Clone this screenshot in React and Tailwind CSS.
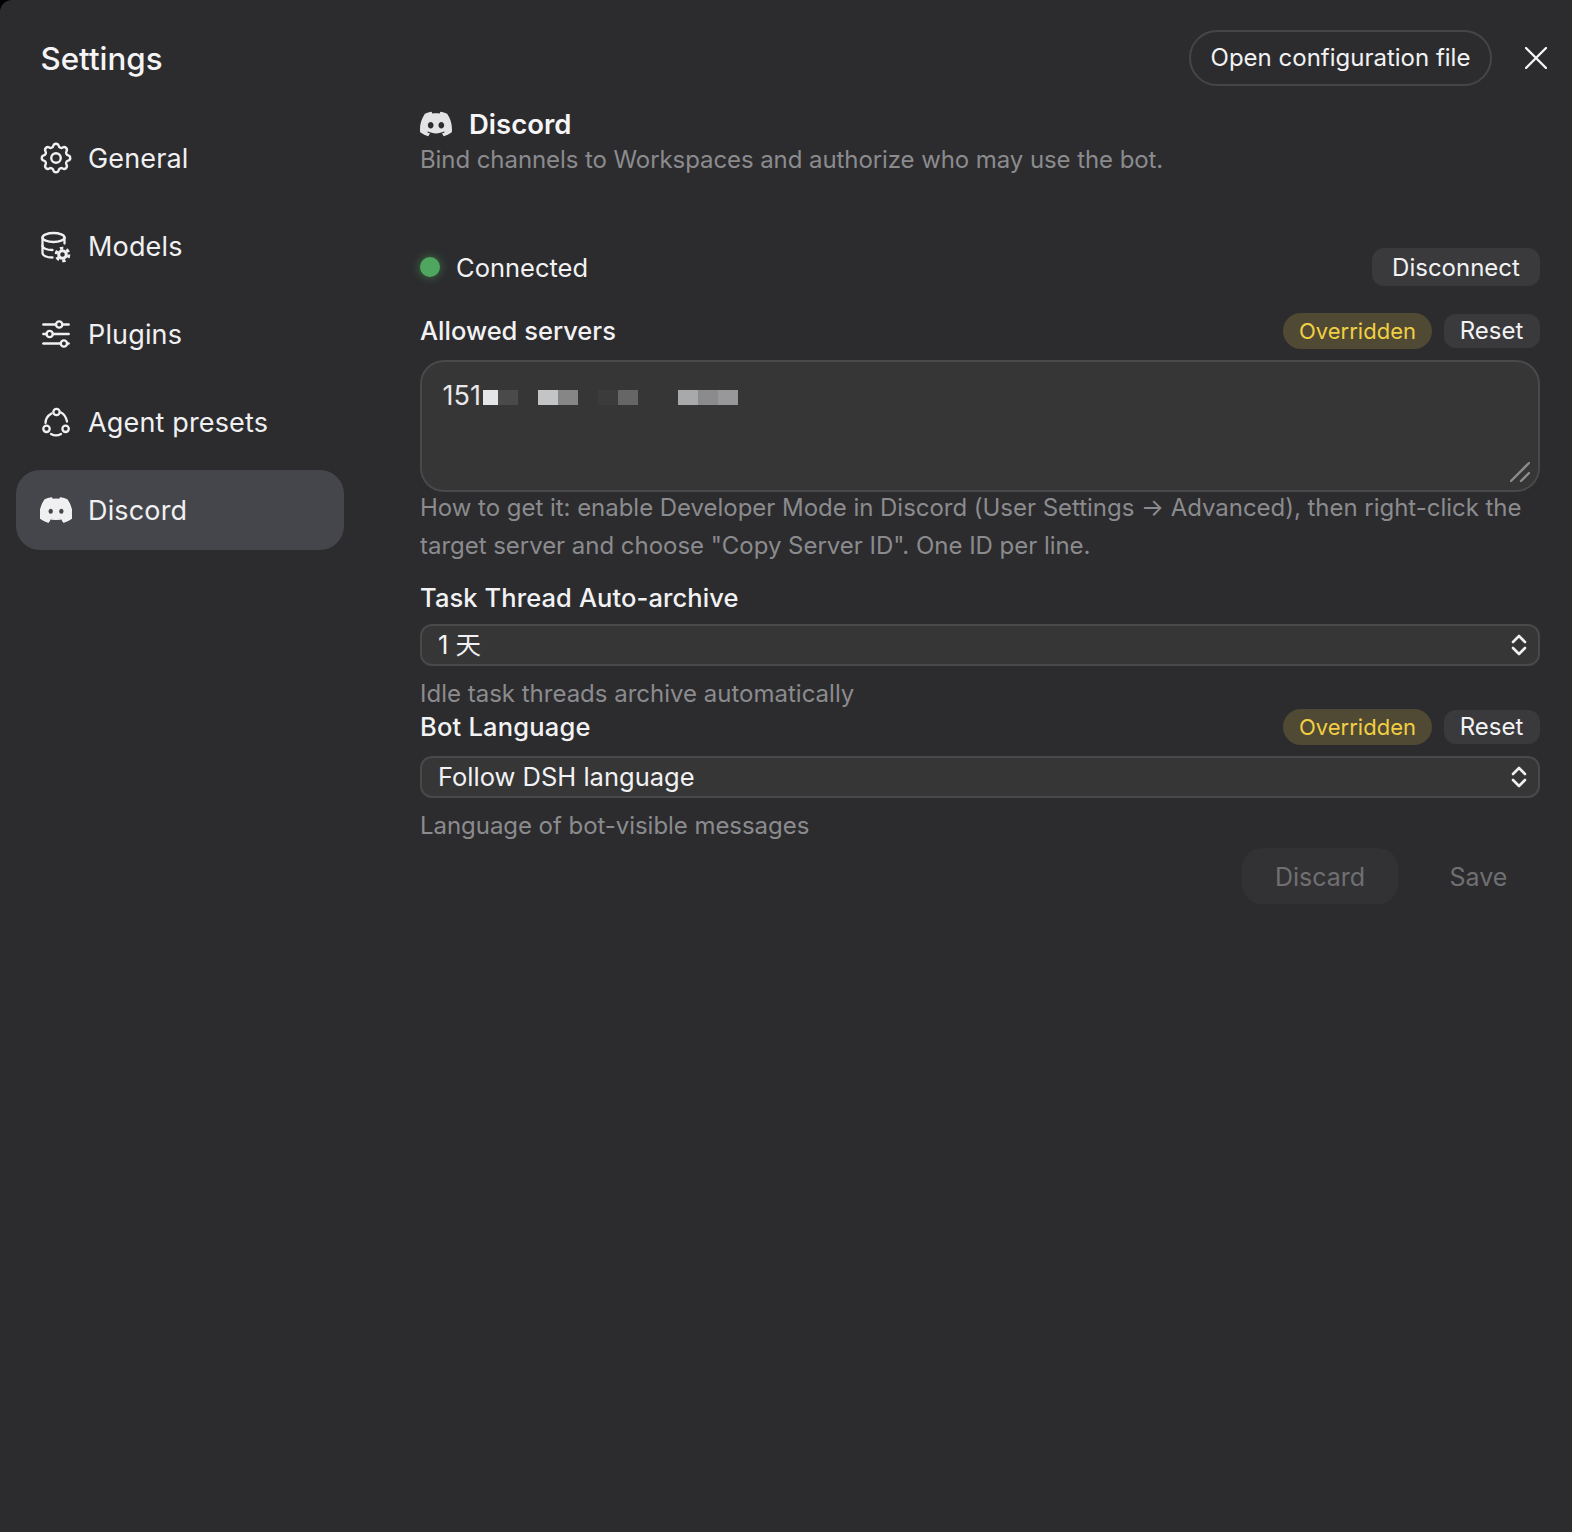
import React from "react";
import { TbSettings, TbAdjustmentsHorizontal } from "react-icons/tb";
import { SiDiscord } from "react-icons/si";

function AgentIcon({ className }) {
  return (
    <svg viewBox="0 0 38 38" fill="none" stroke="currentColor" strokeWidth="2.300" strokeLinecap="round" strokeLinejoin="round" className={className}>
      <circle cx="19.500" cy="9" r="3.200" />
      <circle cx="9.500" cy="25.800" r="3.200" />
      <circle cx="28.600" cy="25.800" r="3.200" />
      <path d="M14.500 10.500C11 12.500 8.500 16 8.500 20" />
      <path d="M24 9.500c3 1.500 5 4.500 6 9" />
      <path d="M14 31c3 1.700 7 1.700 10 0" />
    </svg>
  );
}

function ModelsIcon({ className }) {
  return (
    <svg viewBox="0 0 38 38" fill="none" stroke="currentColor" strokeWidth="2.300" strokeLinecap="round" strokeLinejoin="round" className={className}>
      <ellipse cx="16.500" cy="10.500" rx="11" ry="4.500" />
      <path d="M5.500 10.500v15.500c0 2.600 4 4.500 10 4.500" />
      <path d="M27.500 10.500v6" />
      <path d="M5.500 18.500c0 2.600 4 4.500 10 4.500" />
      <circle cx="25.500" cy="27.500" r="3.800" strokeWidth="3" />
      <circle cx="25.500" cy="27.500" r="6.400" strokeWidth="2.800" strokeLinecap="butt" strokeDasharray="3.400 3.300" />
    </svg>
  );
}

function Chevrons() {
  return (
    <svg viewBox="0 0 16 24" fill="none" stroke="currentColor" strokeWidth="2.600" strokeLinecap="round" strokeLinejoin="round" className="w-4 h-6 text-[#f0f0f2]">
      <path d="M2 9l6-6 6 6" />
      <path d="M2 15l6 6 6-6" />
    </svg>
  );
}

const nav = [
  { label: "General", Icon: TbSettings, cls: "w-[38px] h-[38px]", stroke: 1.5 },
  { label: "Models", Icon: ModelsIcon, cls: "w-[38px] h-[38px]" },
  { label: "Plugins", Icon: TbAdjustmentsHorizontal, cls: "w-[38px] h-[38px]", stroke: 1.5 },
  { label: "Agent presets", Icon: AgentIcon, cls: "w-[38px] h-[38px]" },
  { label: "Discord", Icon: SiDiscord, cls: "w-[32px] h-[32px]", active: true },
];

const mosaic = [
  ["w-[15px]", "bg-[#e5e6e8]"],
  ["w-[20px]", "bg-[#4a4a4b]"],
  ["w-[20px]", "bg-transparent"],
  ["w-[20px]", "bg-[#c3c4c6]"],
  ["w-[20px]", "bg-[#868687]"],
  ["w-[20px]", "bg-transparent"],
  ["w-[20px]", "bg-[#3b3b3c]"],
  ["w-[20px]", "bg-[#666667]"],
  ["w-[40px]", "bg-transparent"],
  ["w-[20px]", "bg-[#a8a9ab]"],
  ["w-[20px]", "bg-[#8b8b8d]"],
  ["w-[20px]", "bg-[#98989a]"],
];

function Overridden() {
  return (
    <div className="flex items-center gap-3">
      <span className="flex items-center justify-center w-[149px] h-[36px] rounded-full bg-[#504933] text-[#f0cf45] text-[22px]">Overridden</span>
      <button className="flex items-center justify-center w-[96px] h-[34px] pr-[1px] rounded-[12px] bg-[#3a3a3c] text-[#f2f2f4] text-[24px]">Reset</button>
    </div>
  );
}

function Select({ value }) {
  return (
    <div className="flex items-center justify-between h-[42px] pl-[16px] pr-[11px] rounded-[12px] border-2 border-[#49494b] bg-[#363637] text-[#f2f2f4] text-[25.500px]">
      <span>{value}</span>
      <Chevrons />
    </div>
  );
}

export default function App() {
  return (
    <div className="bg-black font-['Inter','Noto_Sans_CJK_SC',sans-serif]">
      <div className="h-[1532px] w-[1572px] overflow-hidden rounded-tl-[12px] bg-[#2c2c2e] flex flex-col">
        <header className="flex items-start justify-between pt-[30px] h-[85px] pl-[40.500px] pr-[25px]">
          <h1 className="text-[31.300px] leading-[58px] font-medium text-[#f4f4f6]">Settings</h1>
          <div className="flex items-center gap-[33px]">
            <button className="flex items-center justify-center w-[303px] h-[56px] rounded-full border-2 border-[#464648] text-[#f2f2f4] text-[24px]">Open configuration file</button>
            <svg viewBox="0 0 22 22" fill="none" stroke="#f4f4f6" strokeWidth="2.400" strokeLinecap="round" className="w-[22px] h-[22px]">
              <path d="M1 1l20 20M21 1L1 21" />
            </svg>
          </div>
        </header>
        <div className="flex flex-1">
          <aside className="w-[420px] pl-[16px] pt-[33px] shrink-0">
            <nav className="flex flex-col gap-2 w-[328px]">
              {nav.map(({ label, Icon, cls, active, stroke }) => (
                <div key={label} className={`flex items-center gap-[13px] h-[80px] pl-[21px] rounded-[24px] text-[27px] tracking-[0.15px] text-[#f0f0f2] ${active ? "bg-[#45464b]" : ""}`}>
                  <span className="w-[38px] h-[38px] shrink-0 flex items-center justify-center">
                    <Icon className={cls} strokeWidth={stroke} />
                  </span>
                  <span className="mt-[2px]">{label}</span>
                </div>
              ))}
            </nav>
          </aside>
          <main className="w-[1120px] pt-[20px]">
            <div className="flex items-center gap-[17px] h-[38px]">
              <SiDiscord className="w-[32px] h-[32px] text-[#e3e3e6]" />
              <h2 className="text-[27.500px] font-semibold text-[#f6f6f8] mt-[2px]">Discord</h2>
            </div>
            <p className="text-[24px] leading-[34px] text-[#8b8b8e] tracking-[-0.08px]">Bind channels to Workspaces and authorize who may use the bot.</p>
            <div className="flex items-center justify-between mt-[71px] h-[38px]">
              <div className="flex items-center gap-[16px]">
                <span className="w-[20px] h-[20px] rounded-full bg-[#4fa75f] shadow-[0_0_10px_rgba(79,167,95,0.6)]" />
                <span className="text-[25.500px] text-[#f2f2f4] mt-[3px]">Connected</span>
              </div>
              <button className="flex items-center justify-center w-[168px] h-[38px] pt-[2px] rounded-[12px] bg-[#3a3a3c] text-[#f2f2f4] text-[24px]">Disconnect</button>
            </div>
            <div className="flex items-center justify-between mt-[27px] h-[36px]">
              <span className="text-[25.500px] font-medium text-[#f2f2f4]">Allowed servers</span>
              <Overridden />
            </div>
            <div className="relative mt-[11px] h-[132px] rounded-[24px] border-2 border-[#49494b] bg-[#363637] pl-[20.500px] pt-[15px] text-[27px] leading-[38px] text-[#e8e8ea]">
              151
              <div className="absolute left-[61px] top-[28px] flex h-[15px]">
                {mosaic.map(([w, c], i) => (
                  <span key={i} className={`${w} ${c}`} />
                ))}
              </div>
              <svg viewBox="0 0 20 20" fill="none" stroke="#8c8c8e" strokeWidth="2.400" strokeLinecap="round" className="absolute right-[8px] bottom-[8px] w-[20px] h-[20px]">
                <path d="M1 19L19 1M11 19l8-8" />
              </svg>
            </div>
            <p className="text-[24px] leading-[38px] text-[#8b8b8e] tracking-[-0.03px] mt-[-3px]">How to get it: enable Developer Mode in Discord (User Settings → Advanced), then right-click the target server and choose "Copy Server ID". One ID per line.</p>
            <div className="text-[25.500px] font-medium text-[#f2f2f4] tracking-[0.1px] mt-[14px] h-[38px] leading-[38px]">Task Thread Auto-archive</div>
            <div className="mt-[7px]">
              <Select value="1 天" />
            </div>
            <p className="text-[24px] leading-[30px] text-[#8b8b8e] mt-[13px]">Idle task threads archive automatically</p>
            <div className="flex items-center justify-between h-[36px]">
              <span className="text-[25.500px] font-medium text-[#f2f2f4] tracking-[0.2px]">Bot Language</span>
              <Overridden />
            </div>
            <div className="mt-[11px]">
              <Select value="Follow DSH language" />
            </div>
            <p className="text-[24px] leading-[38px] text-[#8b8b8e] tracking-[-0.05px] mt-[9px]">Language of bot-visible messages</p>
            <div className="flex items-center justify-end mt-[3px]">
              <button className="w-[156px] h-[56px] pt-[4px] rounded-[20px] bg-[#323234] text-[#6f6f72] text-[25px]">Discard</button>
              <button className="w-[123px] ml-[19px] h-[56px] pt-[4px] text-[#6f6f72] text-[25px]">Save</button>
            </div>
          </main>
        </div>
      </div>
    </div>
  );
}
